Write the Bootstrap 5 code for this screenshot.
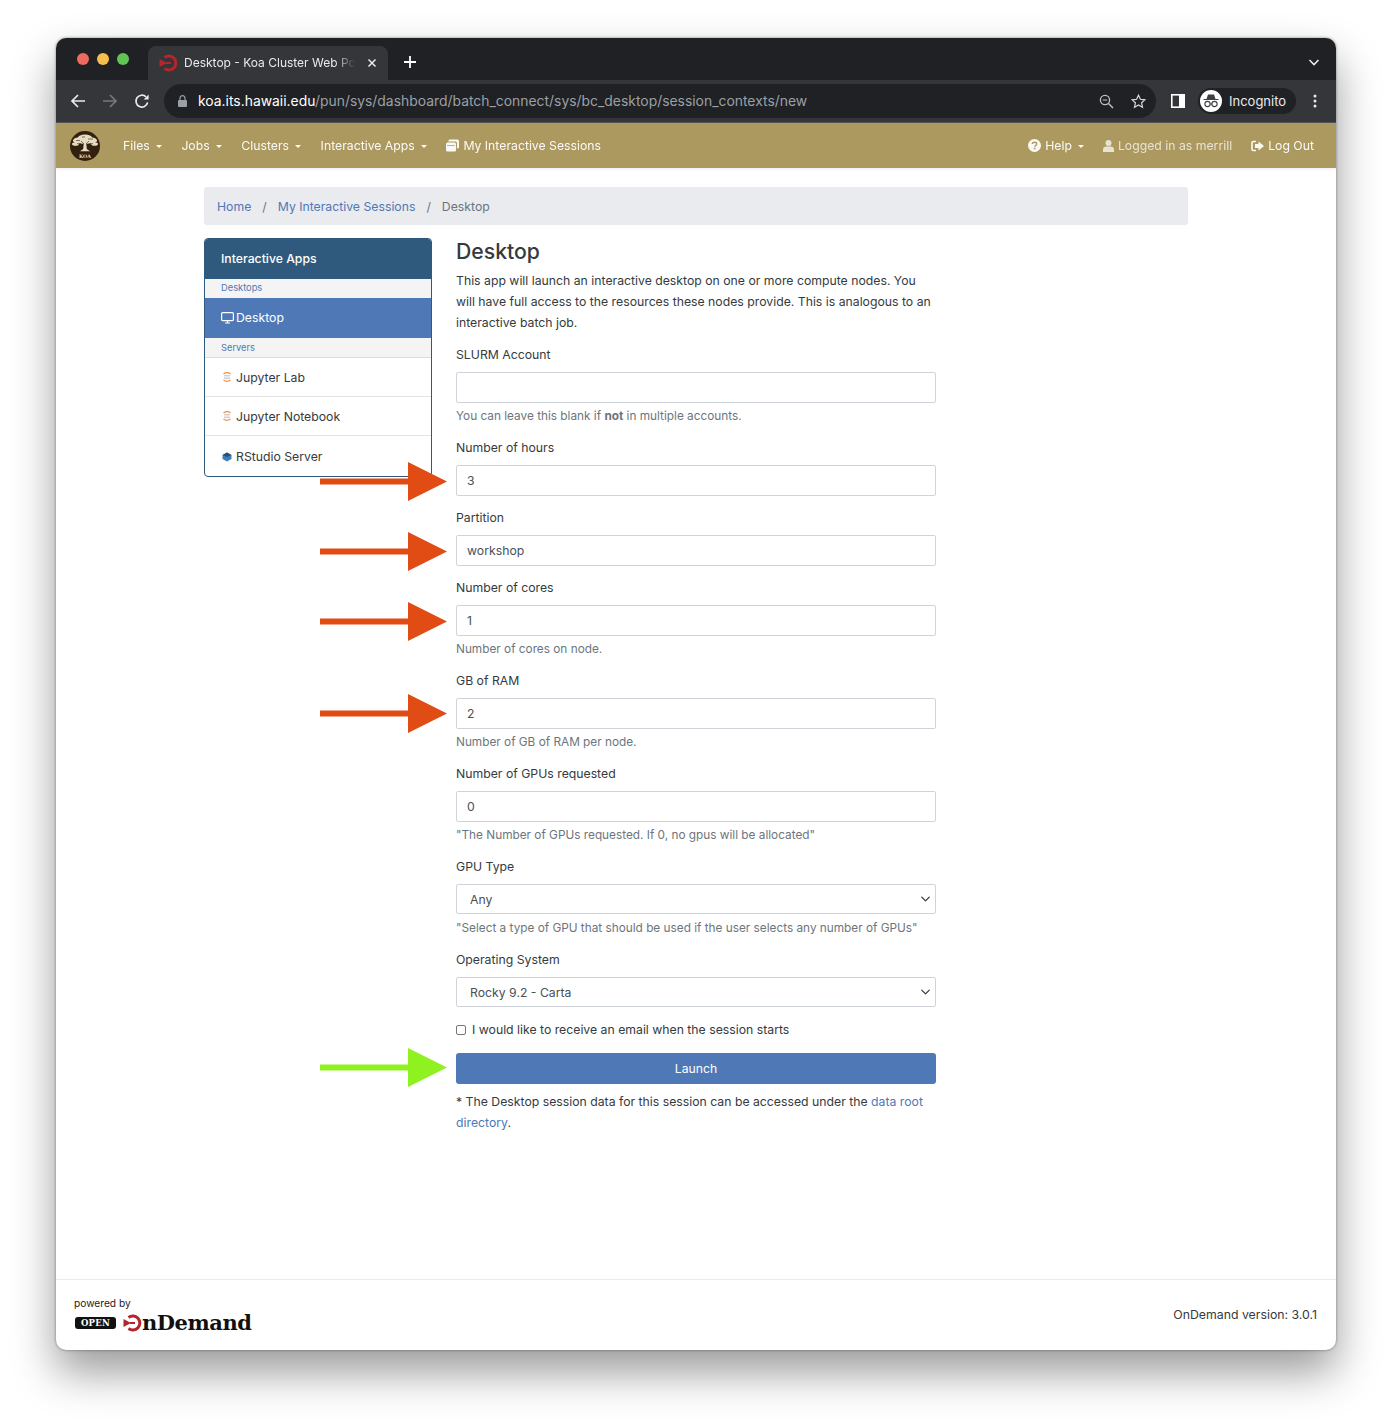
<!DOCTYPE html>
<html lang="en">
<head>
  <meta charset="UTF-8" />
  <meta name="viewport" content="width=device-width, initial-scale=1.0" />
  <title>Desktop - Koa Cluster Web Portal</title>
  <link rel="stylesheet" href="https://cdn.jsdelivr.net/npm/bootstrap@5.3.0/dist/css/bootstrap.min.css" />
  <style>
    body { background: #fff; font-family: Inter, Roboto, "Liberation Sans", sans-serif; font-size: 12.25px; line-height: 21px; color: #343a40; }
    .mac-stage { height: 1424px; padding: 38px 56px 0; }
    .mac-window { width: 1280px; height: 1312px; border-radius: 10px; overflow: hidden; background: #fff; box-shadow: 0 22px 44px rgba(0,0,0,.4), 0 0 3px rgba(0,0,0,.45); }

    .tab-strip { height: 42px; background: #202124; padding: 8px 15px 0 0; color: #fff; }
    .lights { width: 92px; padding: 7px 0 0 21px; gap: 8px; }
    .light { width: 12px; height: 12px; border-radius: 50%; }
    .light-red { background: #ed6a5e; }
    .light-yellow { background: #f4bf4f; }
    .light-green { background: #61c554; }
    .browser-tab { width: 240px; height: 34px; background: #35363a; border-radius: 8px 8px 0 0; padding: 0 11px; font-size: 12px; }
    .tab-title { width: 171px; margin: 0 0 1px 7px; white-space: nowrap; overflow: hidden; color: #e8eaed; -webkit-mask-image: linear-gradient(90deg, #000 88%, transparent); mask-image: linear-gradient(90deg, #000 88%, transparent); }
    .new-tab { margin-left: 14px; }

    .tool-bar { height: 43px; background: #35363a; border-bottom: 1px solid #55565a; padding: 0 19px 0 6px; }
    .tool-btn { width: 32px; display: flex; justify-content: center; }
    .omnibox { width: 992px; height: 34px; margin: 0 15px 0 6px; border-radius: 17px; background: #202124; padding: 0 10px 0 14px; font-size: 13.9px; color: #9aa0a6; white-space: nowrap; }
    .url-host { color: #fff; }
    .url-lock { margin-right: 11px; }
    .omni-icon { margin-left: 17px; }
    .incog-pill { width: 98px; height: 26px; margin-left: 13px; background: #202124; border-radius: 13px; color: #e8eaed; font-size: 13px; padding-left: 1px; gap: 7px; }
    .incog-face { width: 22px; height: 22px; border-radius: 50%; background: #fff; margin-left: 1px; }

    .koa-nav { height: 45px; background: #ac9960; padding: 0 22px 0 14px; box-shadow: 0 1px 3px rgba(0,0,0,.08); }
    .koa-nav a { color: #fff; opacity: .95; text-decoration: none; }
    .koa-nav .muted-item { opacity: .72; color: #fff; }
    .koa-logo { margin-right: 23px; }
    .nav-gap { gap: 19.6px; }
    .nav-gap-end { gap: 19px; }
    .caret-down { display: inline-block; margin-left: 6px; vertical-align: 2px; border-top: 3.5px solid #fff; border-left: 3.5px solid transparent; border-right: 3.5px solid transparent; }

    .page-body { width: 984px; margin: 19px auto 0; }
    .crumbs { height: 38px; background: #e9ebef; border-radius: 3px; padding: 0 13px; margin-bottom: 13px; }
    .crumbs .breadcrumb { margin: 0; --bs-breadcrumb-divider-color: #6c757d; --bs-breadcrumb-item-active-color: #6c757d; --bs-breadcrumb-item-padding-x: 11px; }
    a { color: #4f78b5; text-decoration: none; }

    .side-col { width: 228px; }
    .side-menu { border: 1px solid #2f5a7e; border-radius: 4px; overflow: hidden; }
    .side-head { height: 40px; background: #2f5a7e; color: #fff; padding: 0 16px 1px; font-weight: 500; display: flex; align-items: center; }
    .side-group { height: 18.5px; background: #f4f4f4; color: #4f78b5; font-size: 9.3px; padding: 0 16px 1px; display: flex; align-items: center; }
    .side-item { height: 39.2px; padding: 0 16px; display: flex; align-items: center; color: #343a40; border-bottom: 1px solid #e3e3e3; gap: 3px; }
    .side-item:last-child { border-bottom: 0; padding-top: 1.5px; }
    .side-active { background: #4f79b6; color: #fff; border-bottom: 0; height: 40px; gap: 2px; }
    .side-servers { border-bottom: 1px solid #dcdcdc; height: 20.5px; padding-bottom: .5px; }

    .form-col { width: 480px; margin-left: 24px; }
    .form-col h3 { font-size: 21.2px; font-weight: 500; line-height: 26px; margin: 0 0 6px; color: #343a40; }
    .form-col p { margin-bottom: 11px; }
    .field { margin-bottom: 11px; }
    .field label { display: block; margin-bottom: 7px; }
    .field-box { position: relative; }
    .form-control, .form-select { height: 31px; font-size: 12.25px; line-height: 21px; padding: 0 10px; border-radius: 2px; color: #495057; border-color: #ced4da; }
    .form-select { height: 30px; padding: 1px 10px 0 13px; background-position: right 3px center; background-size: 13px 10px; }
    .hint-text { margin-top: 4px; height: 19px; line-height: 18px; font-size: 11.8px; color: #6c757d; white-space: nowrap; }
    .form-select + .hint-text { margin-top: 5px; }
    .check-row { margin: 12px 0 13px; height: 21px; gap: 6px; }
    .check-row .form-check-input { width: 10px; height: 10px; margin: 0; border-radius: 2px; border-color: #767676; }
    .launch-btn { width: 100%; height: 31px; background: #4f79b6; border: 0; border-radius: 3px; color: #fff; font-size: 12.25px; padding: 0; display: block; }
    .launch-note { margin: 7px 0 0; }

    .red-pointer, .lime-pointer { position: absolute; left: -136px; top: -3px; width: 127px; height: 39px; }
    .red-pointer path { fill: #e14b14; }
    .lime-pointer path { fill: #90f120; }
    .lime-pointer { top: -5px; }
    .pointer-high { top: -4px; }

    .site-foot { height: 71px; border-top: 1px solid #e9ecef; padding: 0 19px 0 18px; font-size: 12.3px; color: #343a40; }
    .powered { font-size: 10.2px; line-height: 14px; color: #222; }
    .od-logo { height: 24px; gap: 7px; margin-top: 1px; }
    .open-tag { width: 41px; height: 12px; margin-left: 1px; background: #111; border-radius: 3px; color: #fff; font: 700 8.5px/12px "DejaVu Serif", serif; text-align: center; letter-spacing: .3px; }
    .od-word { font: 700 21px/24px "DejaVu Serif", "Liberation Serif", serif; color: #111; letter-spacing: -.45px; margin-left: -8px; }
    .foot-version { margin-bottom: 2px; }
  </style>
</head>
<body>
  <div class="mac-stage">
  <div class="mac-window d-flex flex-column">
    <!-- browser chrome -->
    <div class="tab-strip d-flex align-items-start">
      <div class="lights d-flex">
        <span class="light light-red"></span><span class="light light-yellow"></span><span class="light light-green"></span>
      </div>
      <div class="browser-tab d-flex align-items-center">
        <svg width="18" height="18" viewBox="0 0 18 18" fill="none"><path d="M5.500 3.500A7 7 0 1 1 5.500 14.500" stroke="#b3262b" stroke-width="3"/><path d="M.5 5 8 9 .5 13Z" fill="#b3262b"/><path d="M7 9h5" stroke="#b3262b" stroke-width="2"/></svg>
        <span class="tab-title">Desktop - Koa Cluster Web Po</span>
        <svg class="ms-auto" width="10" height="10" viewBox="0 0 10 10"><path d="M1.500 1.500l7 7M8.500 1.500l-7 7" stroke="#e8eaed" stroke-width="1.500"/></svg>
      </div>
      <svg class="new-tab mt-2" width="16" height="16" viewBox="0 0 16 16"><path d="M8 2v12M2 8h12" stroke="#fff" stroke-width="1.800"/></svg>
      <svg class="ms-auto mt-2" width="14" height="16" viewBox="0 0 14 16" fill="none"><path d="M2.500 6 7 10.500 11.500 6" stroke="#e8eaed" stroke-width="1.600"/></svg>
    </div>
    <div class="tool-bar d-flex align-items-center">
      <span class="tool-btn"><svg width="16" height="16" viewBox="0 0 16 16" fill="none"><path d="M15 8H2M8 2 2 8l6 6" stroke="#e8eaed" stroke-width="1.700"/></svg></span>
      <span class="tool-btn"><svg width="16" height="16" viewBox="0 0 16 16" fill="none"><path d="M1 8h13M8 2l6 6-6 6" stroke="#77787b" stroke-width="1.700"/></svg></span>
      <span class="tool-btn"><svg width="16" height="16" viewBox="0 0 16 16" fill="none"><path d="M13.600 9.500A5.900 5.900 0 1 1 12 3.900" stroke="#e8eaed" stroke-width="1.700"/><path d="M14.600 1.600v5h-5Z" fill="#e8eaed"/></svg></span>
      <div class="omnibox d-flex align-items-center">
        <svg class="url-lock" width="9" height="12" viewBox="0 0 9 12"><rect y="5" width="9" height="7" rx="1" fill="#9aa0a6"/><path d="M2 5V3.200a2.500 2.500 0 0 1 5 0V5" fill="none" stroke="#9aa0a6" stroke-width="1.200"/></svg>
        <span><span class="url-host">koa.its.hawaii.edu</span>/pun/sys/dashboard/batch_connect/sys/bc_desktop/session_contexts/new</span>
        <svg class="ms-auto" width="15" height="15" viewBox="0 0 15 15" fill="none"><circle cx="6" cy="6" r="4.600" stroke="#bdc1c6" stroke-width="1.300"/><path d="M9.500 9.500 14 14" stroke="#bdc1c6" stroke-width="1.400"/><path d="M3.700 6h4.600" stroke="#bdc1c6" stroke-width="1.200"/></svg>
        <svg class="omni-icon" width="15" height="15" viewBox="0 0 15 15" fill="none"><path d="M7.500 1.200 9.400 5.300l4.500.5-3.300 3 .9 4.500-4-2.300-4 2.300.9-4.500-3.300-3 4.500-.5Z" stroke="#d5d7da" stroke-width="1.200"/></svg>
      </div>
      <svg width="14" height="14" viewBox="0 0 14 14"><rect width="14" height="14" fill="#fff"/><rect x="1.600" y="1.600" width="6.400" height="10.800" fill="#35363a"/></svg>
      <div class="incog-pill d-flex align-items-center">
        <span class="incog-face d-flex align-items-center justify-content-center">
          <svg width="18" height="18" viewBox="0 0 18 18" fill="none"><path d="M4.500 7 6 2.500h6L13.500 7Z" fill="#3c4043"/><path d="M1.500 7.500h15" stroke="#3c4043" stroke-width="1.200"/><circle cx="5.500" cy="12" r="2.600" stroke="#3c4043" stroke-width="1.100"/><circle cx="12.500" cy="12" r="2.600" stroke="#3c4043" stroke-width="1.100"/><path d="M8 12h2" stroke="#3c4043"/></svg>
        </span>
        <span>Incognito</span>
      </div>
      <svg class="ms-auto" width="4" height="14" viewBox="0 0 4 14"><circle cx="2" cy="2" r="1.500" fill="#e8eaed"/><circle cx="2" cy="7" r="1.500" fill="#e8eaed"/><circle cx="2" cy="12" r="1.500" fill="#e8eaed"/></svg>
    </div>

    <!-- app navbar -->
    <nav class="koa-nav d-flex align-items-center">
      <svg class="koa-logo" width="30" height="30" viewBox="0 0 30 30"><circle cx="15" cy="15" r="15" fill="#33210f"/><g fill="#e6dcc2"><ellipse cx="15" cy="6.500" rx="7" ry="3"/><ellipse cx="8" cy="9.500" rx="5" ry="3"/><ellipse cx="22" cy="9.500" rx="5" ry="3"/><ellipse cx="5.500" cy="13" rx="3.500" ry="1.800"/><ellipse cx="24.500" cy="13" rx="3.500" ry="1.800"/><ellipse cx="15" cy="10.500" rx="7" ry="2.500"/><path d="M13.800 12h2.400l.6 6 3.200 2.200H10l3.200-2.200Z"/></g><path d="M6 9.500h4M12 6h3M18 8h5M7 12.500l6 1.500M23 12.500l-6 1.500M11 10l3 3M19 10l-3 3" stroke="#33210f" stroke-width=".6"/><text x="15" y="26.500" text-anchor="middle" font-family="DejaVu Serif, serif" font-weight="700" font-size="4.800" fill="#e6dcc2">KOA</text></svg>
      <div class="d-flex align-items-center nav-gap">
        <a href="#">Files<span class="caret-down"></span></a>
        <a href="#">Jobs<span class="caret-down"></span></a>
        <a href="#">Clusters<span class="caret-down"></span></a>
        <a href="#">Interactive Apps<span class="caret-down"></span></a>
        <a href="#" class="d-flex align-items-center gap-1">
          <svg width="13" height="13" viewBox="0 0 13 13"><path d="M4 .5h7.500a1.500 1.500 0 0 1 1.500 1.500v6a1.500 1.500 0 0 1-1.500 1.500H11V4a1.500 1.500 0 0 0-1.500-1.500h-7A1.500 1.500 0 0 1 4 .5Z" fill="#fff"/><path d="M1.500 3.500h7A1.500 1.500 0 0 1 10 5v6a1.500 1.500 0 0 1-1.500 1.500h-7A1.500 1.500 0 0 1 0 11V5a1.500 1.500 0 0 1 1.500-1.500Zm-.5 2.500v.8h8V6Z" fill="#fff" fill-rule="evenodd"/></svg>
          My Interactive Sessions</a>
      </div>
      <div class="ms-auto d-flex align-items-center nav-gap-end">
        <a href="#" class="d-flex align-items-center gap-1">
          <svg width="13" height="13" viewBox="0 0 12 12"><circle cx="6" cy="6" r="6" fill="#fff"/><path d="M4 4.600C4 3.500 5 3 6 3s2 .6 2 1.600c0 1.500-1.800 1.300-1.800 2.600" fill="none" stroke="#ac9960" stroke-width="1.300"/><rect x="5.300" y="8" width="1.600" height="1.500" fill="#ac9960"/></svg>
          <span>Help<span class="caret-down"></span></span></a>
        <span class="muted-item d-flex align-items-center gap-1">
          <svg width="11" height="12" viewBox="0 0 11 12"><circle cx="5.500" cy="3" r="3" fill="#fff"/><path d="M0 12V9.500C0 7.500 1.500 6.500 3 6.500h5c1.500 0 3 1 3 3V12Z" fill="#fff"/></svg>
          Logged in as merrill</span>
        <a href="#" class="d-flex align-items-center gap-1">
          <svg width="13" height="12" viewBox="0 0 13 12" fill="none"><path d="M5 1.500H2.200C1.500 1.500 1 2 1 2.700v6.600c0 .7.500 1.200 1.200 1.200H5" stroke="#fff" stroke-width="1.600"/><path d="M7.500 1.500 13 6l-5.500 4.500V8H4V4h3.500Z" fill="#fff"/></svg>
          Log Out</a>
      </div>
    </nav>

    <div class="page-body">
      <div class="crumbs d-flex align-items-center">
        <ol class="breadcrumb">
          <li class="breadcrumb-item"><a href="#">Home</a></li>
          <li class="breadcrumb-item"><a href="#">My Interactive Sessions</a></li>
          <li class="breadcrumb-item active">Desktop</li>
        </ol>
      </div>

      <div class="d-flex align-items-start">
        <div class="side-col">
          <div class="side-menu">
            <div class="side-head">Interactive Apps</div>
            <div class="side-group">Desktops</div>
            <a class="side-item side-active" href="#">
              <svg width="13" height="12" viewBox="0 0 13 12" fill="none"><rect x=".6" y=".6" width="11.800" height="8" rx="1" stroke="#fff" stroke-width="1.200"/><path d="M4 11h5M6.500 9v2" stroke="#fff" stroke-width="1.200"/></svg>
              Desktop</a>
            <div class="side-group side-servers">Servers</div>
            <a class="side-item" href="#">
              <svg width="12" height="12" viewBox="0 0 12 12" fill="none"><path d="M2.500 3c2-1.500 5-1.500 7 0M2.500 9c2 1.500 5 1.500 7 0" stroke="#e8924a" stroke-width="1.200"/><path d="M3 6h6M3 4.500h6M3 7.500h6" stroke="#bbb" stroke-width=".7"/></svg>
              Jupyter Lab</a>
            <a class="side-item" href="#">
              <svg width="12" height="12" viewBox="0 0 12 12" fill="none"><path d="M2.500 3c2-1.500 5-1.500 7 0M2.500 9c2 1.500 5 1.500 7 0" stroke="#e8924a" stroke-width="1.200"/><path d="M3 6h6M3 4.500h6M3 7.500h6" stroke="#bbb" stroke-width=".7"/></svg>
              Jupyter Notebook</a>
            <a class="side-item" href="#">
              <svg width="12" height="12" viewBox="0 0 12 12"><path d="M6 1.500 10.500 4v4L6 10.500 1.500 8V4Z" fill="#3f7fb8"/><path d="M1.500 4 6 1.500 10.500 4 6 6Z" fill="#274f78"/></svg>
              RStudio Server</a>
          </div>
        </div>

        <div class="form-col">
          <h3>Desktop</h3>
          <p>This app will launch an interactive desktop on one or more compute nodes. You will have full access to the resources these nodes provide. This is analogous to an interactive batch job.</p>

          <div class="field">
            <label>SLURM Account</label>
            <div class="field-box"><input type="text" class="form-control" /></div>
            <div class="hint-text">You can leave this blank if <b>not</b> in multiple accounts.</div>
          </div>
          <div class="field">
            <label>Number of hours</label>
            <div class="field-box">
              <input type="text" class="form-control" value="3" />
              <svg class="red-pointer" viewBox="0 0 127 39"><path d="M0 16.500h88V0l39 19.500L88 39V22.500H0Z"/></svg>
            </div>
          </div>
          <div class="field">
            <label>Partition</label>
            <div class="field-box">
              <input type="text" class="form-control" value="workshop" />
              <svg class="red-pointer" viewBox="0 0 127 39"><path d="M0 16.500h88V0l39 19.500L88 39V22.500H0Z"/></svg>
            </div>
          </div>
          <div class="field">
            <label>Number of cores</label>
            <div class="field-box">
              <input type="text" class="form-control" value="1" />
              <svg class="red-pointer" viewBox="0 0 127 39"><path d="M0 16.500h88V0l39 19.500L88 39V22.500H0Z"/></svg>
            </div>
            <div class="hint-text">Number of cores on node.</div>
          </div>
          <div class="field">
            <label>GB of RAM</label>
            <div class="field-box">
              <input type="text" class="form-control" value="2" />
              <svg class="red-pointer pointer-high" viewBox="0 0 127 39"><path d="M0 16.500h88V0l39 19.500L88 39V22.500H0Z"/></svg>
            </div>
            <div class="hint-text">Number of GB of RAM per node.</div>
          </div>
          <div class="field">
            <label>Number of GPUs requested</label>
            <div class="field-box"><input type="text" class="form-control" value="0" /></div>
            <div class="hint-text">"The Number of GPUs requested. If 0, no gpus will be allocated"</div>
          </div>
          <div class="field">
            <label>GPU Type</label>
            <select class="form-select"><option>Any</option></select>
            <div class="hint-text">"Select a type of GPU that should be used if the user selects any number of GPUs"</div>
          </div>
          <div class="field mb-0">
            <label>Operating System</label>
            <select class="form-select"><option>Rocky 9.2 - Carta</option></select>
          </div>
          <div class="check-row d-flex align-items-center">
            <input type="checkbox" class="form-check-input" />
            <span>I would like to receive an email when the session starts</span>
          </div>
          <div class="field-box">
            <button type="button" class="launch-btn">Launch</button>
            <svg class="lime-pointer" viewBox="0 0 127 39"><path d="M0 16.500h88V0l39 19.500L88 39V22.500H0Z"/></svg>
          </div>
          <p class="launch-note">* The Desktop session data for this session can be accessed under the <a href="#">data root directory</a>.</p>
        </div>
      </div>
    </div>

    <footer class="site-foot mt-auto d-flex align-items-center justify-content-between">
      <div>
        <div class="powered">powered by</div>
        <div class="od-logo d-flex align-items-center">
          <span class="open-tag">OPEN</span>
          <svg width="20" height="18" viewBox="0 0 20 18" fill="none"><path d="M5.500 3.500A7 7 0 1 1 5.500 14.500" stroke="#b3262b" stroke-width="3"/><path d="M.5 5 8 9 .5 13Z" fill="#b3262b"/><path d="M7 9h5" stroke="#b3262b" stroke-width="2"/></svg>
          <span class="od-word">nDemand</span>
        </div>
      </div>
      <div class="foot-version">OnDemand version: 3.0.1</div>
    </footer>
  </div>
  </div>
  <script src="https://cdn.jsdelivr.net/npm/bootstrap@5.3.0/dist/js/bootstrap.bundle.min.js"></script>
</body>
</html>
